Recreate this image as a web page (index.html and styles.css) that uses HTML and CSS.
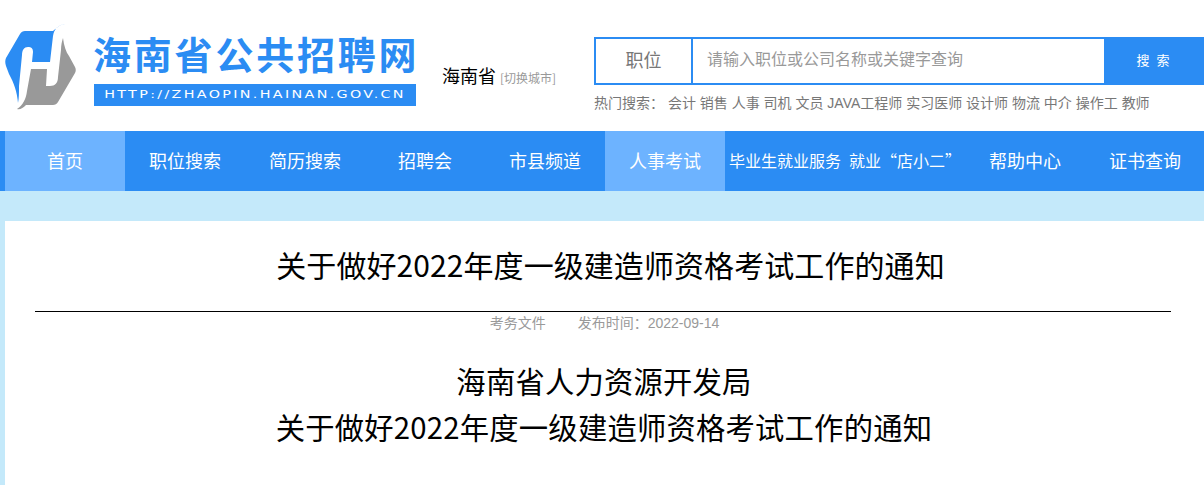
FILE: index.html
```html
<!DOCTYPE html>
<html lang="zh-CN">
<head>
  <meta charset="UTF-8">
  <meta name="viewport" content="width=device-width, initial-scale=1.0">
  <title>关于做好2022年度一级建造师资格考试工作的通知</title>
  <link rel="stylesheet" href="styles.css">
</head>
<body>
  <header class="header">
    <div class="wrap header-inner">
      <a class="logo" href="#">
        <svg class="logo-mark" width="72" height="90" viewBox="5 22 72 90">
          <path fill="#2b8cf3" d="M65,24 C58,25 54,29 53,36 L50,62 L32,62 L33,52 C33,48 31,47 28,47 C24,47 22,50 22,55 L19,86 C19,93 19,98 18,103 C17,92 14,83 9,74 L6,66 C5,63 5,60 6,58 L20,34 C21,32 23,31 25,31 L53,31 C57,28 60,24 65,24 Z"/>
          <path fill="#999999" d="M63,38 C64,46 66,52 69,56 L75,67 C76,69 76,71 75,73 L58,102 C57,104 55,105 53,105 L26,105 C23,108 20,110 17,109 C23,105 26,99 27,91 L31,69 L47,69 L46,86 L50,86 C55,86 58,83 58,77 L61,50 C61,45 62,41 63,38 Z"/>
        </svg>
        <div class="logo-text">
          <div class="logo-name">海南省公共招聘网</div>
          <div class="logo-url"><span>HTTP://ZHAOPIN.HAINAN.GOV.CN</span></div>
        </div>
      </a>
      <div class="city">海南省 <a href="#">[切换城市]</a></div>
      <div class="search">
        <form class="search-box">
          <div class="search-type">职位</div>
          <div class="search-input">请输入职位或公司名称或关键字查询</div>
          <button class="search-btn" type="button">搜 索</button>
        </form>
        <div class="hot">
          <span>热门搜索：</span>
          <a href="#">会计</a>
          <a href="#">销售</a>
          <a href="#">人事</a>
          <a href="#">司机</a>
          <a href="#">文员</a>
          <a href="#">JAVA工程师</a>
          <a href="#">实习医师</a>
          <a href="#">设计师</a>
          <a href="#">物流</a>
          <a href="#">中介</a>
          <a href="#">操作工</a>
          <a href="#">教师</a>
        </div>
      </div>
    </div>
  </header>

  <nav class="nav">
    <div class="wrap nav-inner">
      <a class="active" href="#">首页</a>
      <a href="#">职位搜索</a>
      <a href="#">简历搜索</a>
      <a href="#">招聘会</a>
      <a href="#">市县频道</a>
      <a class="active" href="#">人事考试</a>
      <a class="small" href="#">毕业生就业服务</a>
      <a class="small" href="#">就业“店小二”</a>
      <a href="#">帮助中心</a>
      <a href="#">证书查询</a>
    </div>
  </nav>

  <main class="wrap article">
    <h1>关于做好2022年度一级建造师资格考试工作的通知</h1>
    <div class="meta">
      <span>考务文件</span>
      <span>发布时间：2022-09-14</span>
    </div>
    <div class="article-body">
      <p>海南省人力资源开发局</p>
      <p>关于做好2022年度一级建造师资格考试工作的通知</p>
    </div>
  </main>
</body>
</html>
```

FILE: styles.css
```css
html, body {
  overflow-x: hidden;
}
body {
  margin: 0;
  padding: 0;
  background: #c4e9fa;
  font-family: "Noto Sans CJK SC", "Liberation Sans", sans-serif;
  color: #000;
}
a {
  color: inherit;
  text-decoration: none;
}
.wrap {
  width: 1200px;
  margin-left: 5px;
}
.header {
  background: #fff;
  height: 131px;
}
.header-inner {
  display: flex;
  margin-left: 0;
  width: 1204px;
  height: 131px;
}
.logo {
  display: flex;
  width: 430px;
  padding: 22px 0 0 5px;
  box-sizing: border-box;
}
.logo-mark {
  flex: none;
}
.logo-text {
  margin: 8px 0 0 17px;
  width: 322px;
}
.logo-name {
  height: 54px;
  margin-left: -1px;
  font-size: 38px;
  line-height: 46px;
  font-weight: 700;
  letter-spacing: 2.8px;
  color: #2b8cf3;
  white-space: nowrap;
}
.logo-url {
  height: 22px;
  line-height: 22px;
  background: #2b8cf3;
  color: #fff;
  font-family: "DejaVu Sans", sans-serif;
  font-size: 11px;
  letter-spacing: 1.8px;
  text-align: center;
  white-space: nowrap;
}
.logo-url span {
  display: inline-block;
  transform: scaleX(1.3);
}
.city {
  width: 152px;
  margin: 62px 0 0 12px;
  font-size: 18px;
  line-height: 26px;
  white-space: nowrap;
}
.city a {
  font-size: 12px;
  color: #999;
}
.search {
  width: 610px;
}
.search-box {
  display: flex;
  height: 48px;
  margin-top: 37px;
  box-sizing: border-box;
  border: 2px solid #2b8cf3;
  border-right: 0;
}
.search-type {
  width: 95px;
  border-right: 2px solid #2b8cf3;
  text-align: center;
  font-size: 18px;
  line-height: 40px;
  color: #777;
}
.search-input {
  flex: 1;
  padding-left: 14px;
  font-size: 16px;
  line-height: 38px;
  color: #999;
}
.search-btn {
  width: 100px;
  margin: -2px 0;
  padding: 0 0 4px;
  border: 0;
  background: #2b8cf3;
  color: #fff;
  font-family: inherit;
  font-size: 13px;
  letter-spacing: 2px;
}
.hot {
  margin-top: 8px;
  font-family: "Liberation Sans", "Noto Sans CJK SC", sans-serif;
  font-size: 14px;
  line-height: 20px;
  color: #777;
  white-space: nowrap;
}
.nav {
  background: #2b8cf3;
  height: 60px;
}
.nav-inner {
  display: flex;
}
.nav a {
  flex: none;
  width: 120px;
  height: 60px;
  text-align: center;
  font-size: 18px;
  line-height: 58px;
  color: #fff;
  white-space: nowrap;
}
.nav a.small {
  font-size: 16px;
}
.nav a.active {
  background: #6db3ff;
}
.article {
  margin-top: 30px;
  padding: 20px 34px 60px 30px;
  box-sizing: border-box;
  background: #fff;
}
.article h1 {
  margin: 0;
  padding: 0 0 24px 15px;
  border-bottom: 1px solid #000;
  text-align: center;
  font-size: 30px;
  line-height: 46px;
  font-weight: 400;
  letter-spacing: 0.08px;
}
.meta {
  display: flex;
  justify-content: center;
  gap: 32px;
  padding-left: 3px;
  font-family: "Liberation Sans", "Noto Sans CJK SC", sans-serif;
  font-size: 14px;
  line-height: 22px;
  color: #999;
}
.article-body {
  margin-top: 23px;
  padding-left: 2px;
  text-align: center;
  font-size: 29.33px;
  line-height: 46px;
  letter-spacing: 0.2px;
}
.article-body p {
  margin: 0;
}
```
